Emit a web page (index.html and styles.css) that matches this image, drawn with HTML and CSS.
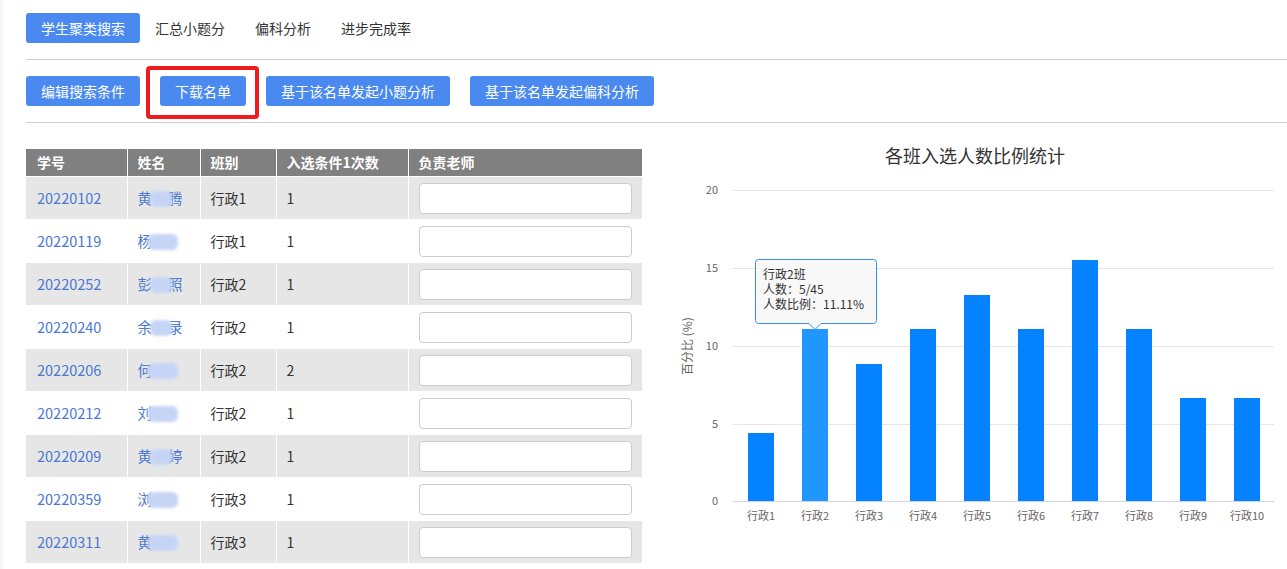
FILE: index.html
```html
<!DOCTYPE html>
<html lang="zh">
<head>
<meta charset="utf-8">
<title>学生聚类搜索</title>
<link rel="stylesheet" href="styles.css">
</head>
<body>
<div class="page">
  <nav class="tabs">
    <span class="tab active">学生聚类搜索</span>
    <span class="tab">汇总小题分</span>
    <span class="tab">偏科分析</span>
    <span class="tab">进步完成率</span>
  </nav>
  <hr class="rule">
  <div class="actions">
    <button class="btn">编辑搜索条件</button>
    <span class="marked"><button class="btn">下载名单</button></span>
    <button class="btn">基于该名单发起小题分析</button>
    <button class="btn">基于该名单发起偏科分析</button>
  </div>
  <hr class="rule">
  <div class="content">
    <table class="grid">
      <colgroup>
        <col class="c1"><col class="c2"><col class="c3"><col class="c4"><col class="c5">
      </colgroup>
      <thead>
        <tr><th>学号</th><th>姓名</th><th>班别</th><th>入选条件1次数</th><th>负责老师</th></tr>
      </thead>
      <tbody>
        <tr><td><a>20220102</a></td><td><a>黄<span class="blur w1"></span>腾</a></td><td>行政1</td><td>1</td><td class="in"><input type="text"></td></tr>
        <tr><td><a>20220119</a></td><td><a>杨<span class="blur w2"></span></a></td><td>行政1</td><td>1</td><td class="in"><input type="text"></td></tr>
        <tr><td><a>20220252</a></td><td><a>彭<span class="blur w1"></span>照</a></td><td>行政2</td><td>1</td><td class="in"><input type="text"></td></tr>
        <tr><td><a>20220240</a></td><td><a>余<span class="blur w1"></span>录</a></td><td>行政2</td><td>1</td><td class="in"><input type="text"></td></tr>
        <tr><td><a>20220206</a></td><td><a>何<span class="blur w2"></span></a></td><td>行政2</td><td>2</td><td class="in"><input type="text"></td></tr>
        <tr><td><a>20220212</a></td><td><a>刘<span class="blur w2"></span></a></td><td>行政2</td><td>1</td><td class="in"><input type="text"></td></tr>
        <tr><td><a>20220209</a></td><td><a>黄<span class="blur w1"></span>婷</a></td><td>行政2</td><td>1</td><td class="in"><input type="text"></td></tr>
        <tr><td><a>20220359</a></td><td><a>浏<span class="blur w2"></span></a></td><td>行政3</td><td>1</td><td class="in"><input type="text"></td></tr>
        <tr><td><a>20220311</a></td><td><a>黄<span class="blur w2"></span></a></td><td>行政3</td><td>1</td><td class="in"><input type="text"></td></tr>
      </tbody>
    </table>
    <div class="chart">
      <svg width="621" height="429" viewBox="0 0 621 429">
        <text class="title" x="313" y="24" text-anchor="middle">各班入选人数比例统计</text>
        <g class="gridlines">
          <line x1="71" y1="51.5" x2="612" y2="51.5"/>
          <line x1="71" y1="129.5" x2="612" y2="129.5"/>
          <line x1="71" y1="207.5" x2="612" y2="207.5"/>
          <line x1="71" y1="285.5" x2="612" y2="285.5"/>
        </g>
        <g class="ylabels" text-anchor="end">
          <text x="56" y="55">20</text>
          <text x="56" y="133">15</text>
          <text x="56" y="211">10</text>
          <text x="56" y="289">5</text>
          <text x="56" y="366">0</text>
        </g>
        <text class="ytitle" transform="translate(30 207) rotate(-90)" text-anchor="middle">百分比 (%)</text>
        <g class="bars">
          <rect x="86" y="294" width="26" height="69"/>
          <rect class="hover" x="140" y="190" width="26" height="173"/>
          <rect x="194" y="225" width="26" height="138"/>
          <rect x="248" y="190" width="26" height="173"/>
          <rect x="302" y="156" width="26" height="207"/>
          <rect x="356" y="190" width="26" height="173"/>
          <rect x="410" y="121" width="26" height="242"/>
          <rect x="464" y="190" width="26" height="173"/>
          <rect x="518" y="259" width="26" height="104"/>
          <rect x="572" y="259" width="26" height="104"/>
        </g>
        <line class="axis" x1="71" y1="362.5" x2="612" y2="362.5"/>
        <g class="xlabels" text-anchor="middle">
          <text x="99" y="381">行政1</text>
          <text x="153" y="381">行政2</text>
          <text x="207" y="381">行政3</text>
          <text x="261" y="381">行政4</text>
          <text x="315" y="381">行政5</text>
          <text x="369" y="381">行政6</text>
          <text x="423" y="381">行政7</text>
          <text x="477" y="381">行政8</text>
          <text x="531" y="381">行政9</text>
          <text x="585" y="381">行政10</text>
        </g>
        <g class="tooltip">
          <path class="tipbox" d="M96.5 120.5 H211.5 Q214.5 120.5 214.5 123.5 V181.5 Q214.5 184.5 211.5 184.5 H159 L153 190.5 L147 184.5 H96.5 Q93.5 184.5 93.5 181.5 V123.5 Q93.5 120.5 96.5 120.5 Z"/>
          <text x="101" y="140">行政2班</text>
          <text x="101" y="155">人数：5/45</text>
          <text x="101" y="170">人数比例：11.11%</text>
        </g>
      </svg>
    </div>
  </div>
</div>
</body>
</html>
```

FILE: styles.css
```css
html, body {
  margin: 0;
  padding: 0;
  background: #fff;
}
body {
  border-left: 3px solid #f2f6fb;
  font-family: "Noto Sans CJK SC", "Microsoft YaHei", sans-serif;
  font-size: 14px;
  color: #333;
  height: 569px;
  overflow: hidden;
}
.page {
  padding: 13px 0 0 23px;
}
.tabs {
  display: flex;
  height: 30px;
}
.tab {
  display: flex;
  align-items: center;
  padding: 0 15px;
  height: 30px;
  line-height: 30px;
  color: #333;
  border-radius: 3px;
}
.tab.active {
  background: #4a8af0;
  color: #fff;
}
.rule {
  border: 0;
  border-top: 1px solid #cfcfcf;
  margin: 16px 0 16px 0;
  height: 0;
}
.actions {
  display: flex;
  gap: 20px;
  height: 30px;
}
.btn {
  height: 30px;
  padding: 0 15px;
  border: 0;
  border-radius: 3px;
  background: #4a8af0;
  color: #fff;
  font-family: inherit;
  font-size: 14px;
  line-height: 30px;
  cursor: pointer;
}
.marked {
  position: relative;
  display: flex;
}
.marked::after {
  content: "";
  position: absolute;
  left: -14px;
  right: -13px;
  top: -10px;
  bottom: -13px;
  border: 4px solid #ee1c1c;
  border-radius: 4px;
  pointer-events: none;
}
.content {
  display: flex;
  gap: 19px;
  margin-top: 1px;
}
.grid {
  margin-top: 10px;
  width: 616px;
  border-collapse: collapse;
  table-layout: fixed;
  align-self: flex-start;
}
.c1 { width: 101px; }
.c2 { width: 73px; }
.c3 { width: 76px; }
.c4 { width: 132px; }
.c5 { width: 234px; }
.grid th {
  background: #808080;
  color: #fff;
  font-weight: bold;
  text-align: left;
  height: 27px;
  padding: 0 10px;
  border: 1px solid #fff;
  border-top: 0;
  line-height: 27px;
}
.grid th:first-child, .grid td:first-child { border-left: 0; }
.grid th:first-child, .grid td:first-child { padding-left: 11px; }
.grid td {
  height: 42px;
  padding: 0 10px;
  border: 1px solid #fff;
  line-height: 20px;
  color: #333;
  white-space: nowrap;
  overflow: hidden;
}
.grid td a { font-size: 14.5px; }
.grid tbody tr:nth-child(odd) td { background: #e6e6e6; }
.grid a {
  color: #4a78d2;
  text-decoration: none;
}
.blur {
  display: inline-block;
  height: 16px;
  vertical-align: -3px;
  background: #c6d5f6;
  border-radius: 6px;
  filter: blur(1.5px);
}
.w1 { width: 22px; margin: 0 -4px 0 -2px; }
.w2 { width: 30px; margin-left: -4px; }
.grid td.in {
  padding: 0 10px 0 10px;
}
.grid input {
  display: block;
  box-sizing: border-box;
  width: 213px;
  height: 31px;
  border: 1px solid #cccccc;
  border-radius: 4px;
  background: #fff;
}
.chart svg {
  display: block;
  overflow: visible;
  font-family: "Noto Sans CJK SC", "Microsoft YaHei", sans-serif;
}
.title {
  font-size: 18px;
  fill: #333;
}
.gridlines line {
  stroke: #e6e6e6;
  stroke-width: 1;
}
.axis {
  stroke: #ccd6eb;
  stroke-width: 1;
}
.ylabels text, .xlabels text {
  font-size: 11px;
  fill: #666;
}
.ytitle {
  font-size: 12px;
  fill: #666;
}
.bars rect {
  fill: #0482ff;
}
.bars rect.hover {
  fill: #1f97ff;
}
.tipbox {
  fill: rgba(247, 247, 247, 0.92);
  stroke: #3b8ee6;
  stroke-width: 1;
}
.tooltip text {
  font-size: 12px;
  fill: #333;
}
```
